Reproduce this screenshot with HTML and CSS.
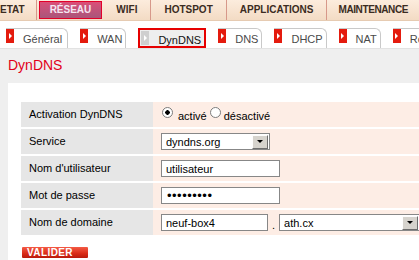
FILE: index.html
```html
<!DOCTYPE html>
<html lang="fr">
<head>
    <meta charset="UTF-8">
    <meta name="viewport" content="width=device-width, initial-scale=1.0">
    <title>DynDNS</title>
    <link rel="stylesheet" href="styles.css">
</head>
<body>

<ul class="menu">
    <li class="premier">ETAT</li>
    <li class="actif">RÉSEAU</li>
    <li>WIFI</li>
    <li>HOTSPOT</li>
    <li>APPLICATIONS</li>
    <li class="serre">MAINTENANCE</li>
    <li class="vide"></li>
</ul>

<ul class="onglets">
    <li class="onglet"><span class="puce"></span><span class="nom">Général</span></li>
    <li class="onglet"><span class="puce"></span><span class="nom">WAN</span></li>
    <li class="onglet choisi"><span class="puce"></span><span class="nom">DynDNS</span></li>
    <li class="onglet"><span class="puce"></span><span class="nom">DNS</span></li>
    <li class="onglet"><span class="puce"></span><span class="nom">DHCP</span></li>
    <li class="onglet"><span class="puce"></span><span class="nom">NAT</span></li>
    <li class="onglet"><span class="puce"></span><span class="nom">Ro</span></li>
</ul>

<div class="contenu">
    <h1 class="titre">DynDNS</h1>

    <div class="cadre">
        <div class="formulaire">
            <div class="libelle">Activation DynDNS</div>
            <div class="valeur choix">
                <input type="radio" name="etat" id="active" checked>
                <label for="active">activé</label>
                <input type="radio" name="etat" id="desactive">
                <label for="desactive">désactivé</label>
            </div>

            <div class="libelle">Service</div>
            <div class="valeur">
                <span class="liste">
                    <select class="service">
                        <option>dyndns.org</option>
                        <option>no-ip.com</option>
                    </select>
                </span>
            </div>

            <div class="libelle">Nom d'utilisateur</div>
            <div class="valeur">
                <input type="text" class="champ" value="utilisateur">
            </div>

            <div class="libelle">Mot de passe</div>
            <div class="valeur">
                <input type="password" class="champ secret" value="123456789">
            </div>

            <div class="libelle">Nom de domaine</div>
            <div class="valeur">
                <input type="text" class="champ court" value="neuf-box4">
                <span class="point">.</span>
                <span class="liste">
                    <select class="domaine">
                        <option>ath.cx</option>
                        <option>dyndns.org</option>
                    </select>
                </span>
            </div>
        </div>

        <button class="valider">VALIDER</button>
    </div>
</div>

</body>
</html>
```

FILE: styles.css
```css
body {
    margin: 0;
    background-color: #efefef;
    font-family: "Liberation Sans", Arial, sans-serif;
    font-size: 11px;
    overflow: hidden;
}

ul {
    list-style: none;
    margin: 0;
    padding: 0;
}

/* menu principal */
.menu {
    display: flex;
    height: 20px;
    background: linear-gradient(#fcecdd, #f3dbc4);
    border-bottom: 1px solid #e6cbb2;
    white-space: nowrap;
}

.menu li {
    padding: 0 13px;
    line-height: 20px;
    font-weight: bold;
    font-size: 10px;
    color: #3b2c22;
    border-right: 1px solid #d7988a;
}

.menu .premier {
    padding-left: 0;
    padding-right: 11px;
}

.menu .serre {
    padding: 0 11px;
    letter-spacing: -0.4px;
}

.menu .vide {
    flex: 1;
    border-right: none;
}

.menu .actif {
    margin: 1px 1px 1px 2px;
    padding: 0 10px;
    line-height: 16px;
    color: #f4e6f2;
    background: linear-gradient(#da4f78, #a9567b);
    border: 1px solid #e2002a;
}

/* onglets */
.onglets {
    display: flex;
    gap: 12px;
    padding: 7px 0 0 6px;
    background-color: #fff;
    white-space: nowrap;
}

.onglet {
    display: flex;
    align-items: flex-start;
    height: 20px;
    box-sizing: border-box;
    background-color: #fff;
    border: 1px solid #c9c9c9;
    border-left: none;
    border-bottom: none;
    border-radius: 0 6px 0 0;
    color: #4a4a4a;
}

.puce {
    display: flex;
    align-items: center;
    justify-content: center;
    width: 8px;
    height: 14px;
    background-color: #e41b0e;
}

.puce::after {
    content: "";
    border-left: 3px solid #fff;
    border-top: 3px solid transparent;
    border-bottom: 3px solid transparent;
}

.nom {
    padding: 4px 3px 0 9px;
    line-height: 13px;
}

.onglet:first-child .nom {
    padding-right: 5px;
}

.onglet.choisi {
    border: 2px solid #e60000;
    border-radius: 0;
    background-color: #eeeeee;
    color: #111;
    padding-left: 1px;
}

.choisi .puce {
    margin-top: 1px;
    background-color: #cfcfcf;
}

.choisi .nom {
    padding-top: 4px;
}

/* contenu */
.contenu {
    padding-left: 8px;
    border-top: 1px solid #e2e2e2;
}

.titre {
    margin: 8px 0 10px 0;
    font-size: 14px;
    font-weight: normal;
    line-height: 16px;
    color: #e2001a;
}

.cadre {
    background-color: #fff;
    padding: 19px 0 40px 13px;
}

.formulaire {
    display: grid;
    grid-template-columns: 132px 1fr;
    grid-auto-rows: 25px;
    row-gap: 2px;
    width: 420px;
}

.libelle {
    background-color: #e6e6e6;
    padding-left: 8px;
    line-height: 25px;
    color: #000;
}

.valeur {
    display: flex;
    align-items: center;
    padding-left: 8px;
    background-color: #fdede5;
}

.valeur.choix {
    align-items: flex-start;
}

.choix input {
    appearance: none;
    width: 11px;
    height: 11px;
    margin: 5px 5px 0 1px;
    border: 1px solid #7c7c7c;
    border-radius: 50%;
    background-color: #fff;
}

.choix input:checked {
    background: radial-gradient(circle, #000 0, #000 2px, #fff 2.5px);
}

.choix label {
    margin-top: 8px;
    line-height: 13px;
}

.choix label[for="active"] {
    margin-right: 3px;
}

.choix #desactive {
    margin-left: 0;
    margin-right: 3px;
}

.champ {
    width: 119px;
    height: 17px;
    box-sizing: border-box;
    margin: 0;
    padding: 0 4px;
    border: 1px solid #878787;
    font-family: "Liberation Sans", Arial, sans-serif;
    font-size: 11px;
    color: #000;
}

.champ.secret {
    font-size: 13px;
    letter-spacing: 0.5px;
    padding-left: 5px;
}

.champ.court {
    width: 107px;
}

.point {
    margin: 0 4px 0 4px;
    padding-top: 4px;
}

.liste {
    position: relative;
    display: inline-block;
    height: 17px;
}

.liste select {
    appearance: none;
    height: 17px;
    box-sizing: border-box;
    margin: 0;
    padding: 0 4px;
    border: 1px solid #878787;
    border-radius: 0;
    background-color: #fff;
    font-family: "Liberation Sans", Arial, sans-serif;
    font-size: 11px;
    color: #000;
}

.liste .service {
    width: 109px;
}

.liste .domaine {
    width: 141px;
}

/* bouton de la liste */
.liste::after {
    content: "";
    position: absolute;
    top: 2px;
    right: 2px;
    width: 14px;
    height: 12px;
    background-color: #d6d3cd;
    border: 1px solid;
    border-color: #fdfdfd #6e6e6e #6e6e6e #fdfdfd;
    pointer-events: none;
}

.liste::before {
    content: "";
    position: absolute;
    top: 7px;
    right: 7px;
    z-index: 1;
    border-top: 3px solid #000;
    border-left: 3px solid transparent;
    border-right: 3px solid transparent;
    pointer-events: none;
}

.valider {
    display: block;
    width: 66px;
    height: 11px;
    margin: 12px 0 0 1px;
    padding: 0 12px 0 2px;
    border: none;
    border-radius: 1px;
    background: linear-gradient(#f45a44, #d92b17 60%, #b91a0c);
    color: #fff;
    font-family: "Liberation Sans", Arial, sans-serif;
    font-size: 10px;
    font-weight: bold;
    line-height: 11px;
    letter-spacing: 0.4px;
    cursor: pointer;
}
```
